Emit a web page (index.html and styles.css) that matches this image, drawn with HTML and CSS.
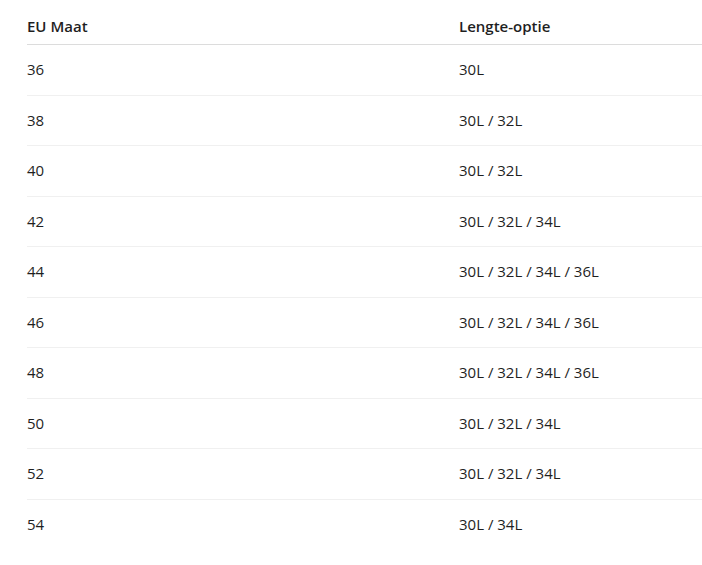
FILE: index.html
```html
<!DOCTYPE html>
<html lang="nl">
<head>
<meta charset="utf-8">
<link rel="stylesheet" href="styles.css">
</head>
<body>
<table class="size-table">
  <thead>
    <tr><th class="col-size">EU Maat</th><th>Lengte-optie</th></tr>
  </thead>
  <tbody>
    <tr><td>36</td><td>30L</td></tr>
    <tr><td>38</td><td>30L / 32L</td></tr>
    <tr><td>40</td><td>30L / 32L</td></tr>
    <tr><td>42</td><td>30L / 32L / 34L</td></tr>
    <tr><td>44</td><td>30L / 32L / 34L / 36L</td></tr>
    <tr><td>46</td><td>30L / 32L / 34L / 36L</td></tr>
    <tr><td>48</td><td>30L / 32L / 34L / 36L</td></tr>
    <tr><td>50</td><td>30L / 32L / 34L</td></tr>
    <tr><td>52</td><td>30L / 32L / 34L</td></tr>
    <tr><td>54</td><td>30L / 34L</td></tr>
  </tbody>
</table>
</body>
</html>
```
FILE: styles.css
```css
html, body {
  margin: 0;
  padding: 0;
  background: #fff;
}
body {
  padding-left: 27px;
  font-family: "Open Sans", "Noto Sans", sans-serif;
  font-size: 15px;
  color: #1f1f1f;
}
.size-table {
  border-collapse: collapse;
  width: 675px;
  table-layout: fixed;
}
.size-table th {
  text-align: left;
  font-weight: 600;
  line-height: 26px;
  padding: 13px 0 5px;
  border-bottom: 1px solid #dcdcdc;
}
.size-table .col-size {
  width: 432px;
}
.size-table td {
  line-height: 25.5px;
  padding: 12px 0;
  border-bottom: 1px solid #f0f0f0;
}
.size-table tbody tr:last-child td {
  border-bottom: none;
}
```
